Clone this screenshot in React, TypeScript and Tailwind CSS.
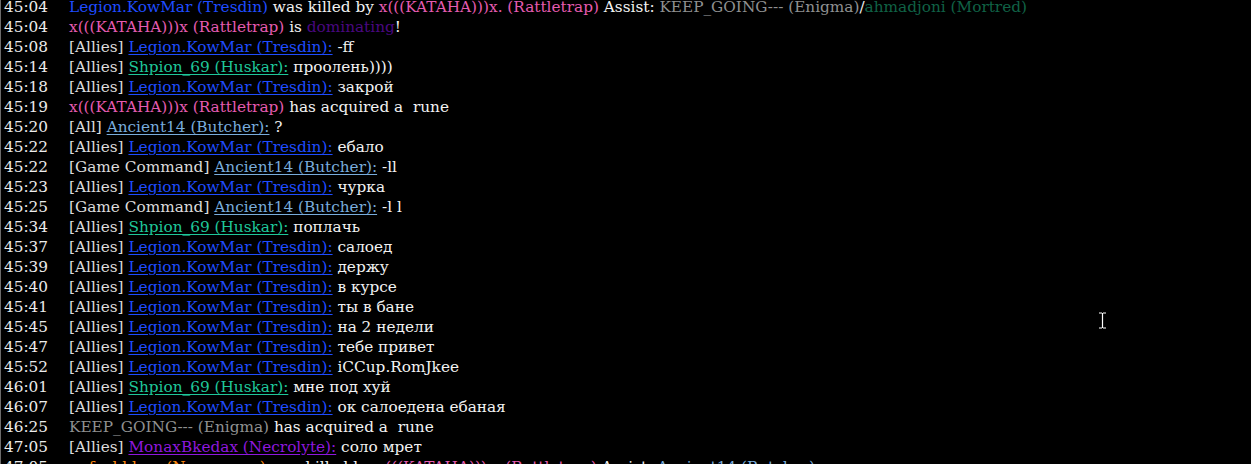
import type { JSX } from "react";

type Seg = { t: string; c?: string; u?: boolean };

const BLUE = "text-[#1f4cff]";
const PINK = "text-[#e55bb0]";
const TEAL = "text-[#1fc79a]";
const LBLUE = "text-[#78acdc]";
const GRAY = "text-[#8f9091]";
const DGREEN = "text-[#106246]";
const PURPLE = "text-[#8e18de]";
const DPURPLE = "text-[#4a0880]";
const ORANGE = "text-[#fe8a0e]";
const TAG = "text-[#dcdcdc]";

const kow = (msg: string): Seg[] => [
  { t: "[Allies] ", c: TAG },
  { t: "Legion.KowMar (Tresdin):", c: BLUE, u: true },
  { t: " " + msg },
];

const shpion = (msg: string): Seg[] => [
  { t: "[Allies] ", c: TAG },
  { t: "Shpion_69 (Huskar):", c: TEAL, u: true },
  { t: " " + msg },
];

const lines: { time: string; segs: Seg[] }[] = [
  {
    time: "45:04",
    segs: [
      { t: "Legion.KowMar (Tresdin)", c: BLUE },
      { t: " was killed by " },
      { t: "x(((KATAHA)))x. (Rattletrap)", c: PINK },
      { t: " Assist: " },
      { t: "KEEP_GOING--- (Enigma)", c: GRAY },
      { t: "/" },
      { t: "ahmadjoni (Mortred)", c: DGREEN },
    ],
  },
  {
    time: "45:04",
    segs: [
      { t: "x(((KATAHA)))x (Rattletrap)", c: PINK },
      { t: " is " },
      { t: "dominating", c: DPURPLE },
      { t: "!" },
    ],
  },
  { time: "45:08", segs: kow("-ff") },
  { time: "45:14", segs: shpion("проолень))))") },
  { time: "45:18", segs: kow("закрой") },
  {
    time: "45:19",
    segs: [
      { t: "x(((KATAHA)))x (Rattletrap)", c: PINK },
      { t: " has acquired a\u00a0 rune" },
    ],
  },
  {
    time: "45:20",
    segs: [
      { t: "[All] ", c: TAG },
      { t: "Ancient14 (Butcher):", c: LBLUE, u: true },
      { t: " ?" },
    ],
  },
  { time: "45:22", segs: kow("ебало") },
  {
    time: "45:22",
    segs: [
      { t: "[Game Command] ", c: TAG },
      { t: "Ancient14 (Butcher):", c: LBLUE, u: true },
      { t: " -ll" },
    ],
  },
  { time: "45:23", segs: kow("чурка") },
  {
    time: "45:25",
    segs: [
      { t: "[Game Command] ", c: TAG },
      { t: "Ancient14 (Butcher):", c: LBLUE, u: true },
      { t: " -l l" },
    ],
  },
  { time: "45:34", segs: shpion("поплачь") },
  { time: "45:37", segs: kow("салоед") },
  { time: "45:39", segs: kow("держу") },
  { time: "45:40", segs: kow("в курсе") },
  { time: "45:41", segs: kow("ты в бане") },
  { time: "45:45", segs: kow("на 2 недели") },
  { time: "45:47", segs: kow("тебе привет") },
  { time: "45:52", segs: kow("iCCup.RomJkee") },
  { time: "46:01", segs: shpion("мне под хуй") },
  { time: "46:07", segs: kow("ок салоедена ебаная") },
  {
    time: "46:25",
    segs: [
      { t: "KEEP_GOING--- (Enigma)", c: GRAY },
      { t: " has acquired a\u00a0 rune" },
    ],
  },
  {
    time: "47:05",
    segs: [
      { t: "[Allies] ", c: TAG },
      { t: "MonaxBkedax (Necrolyte):", c: PURPLE, u: true },
      { t: " соло мрет" },
    ],
  },
  {
    time: "47:05",
    segs: [
      { t: "unfeebble--- (Nevermore)", c: ORANGE },
      { t: " was killed by " },
      { t: "x(((KATAHA)))x. (Rattletrap)", c: PINK },
      { t: " Assist: " },
      { t: "Ancient14 (Butcher)", c: LBLUE },
    ],
  },
];

function Line({ time, segs }: { time: string; segs: Seg[] }): JSX.Element {
  return (
    <div className="flex h-5 items-center whitespace-nowrap">
      <span className="w-[65px] shrink-0 text-[#ececec]">{time}</span>
      <span>
        {segs.map((s, i) => (
          <span
            key={i}
            className={`${s.c ?? "text-[#f2f2f2]"} ${s.u ? "underline underline-offset-[2px]" : ""}`}
          >
            {s.t}
          </span>
        ))}
      </span>
    </div>
  );
}

export default function App() {
  return (
    <div className="relative h-[464px] w-[1251px] overflow-hidden bg-black">
      <div
        className="-mt-[3px] border-l border-[#6b6b6b] pl-[3px] text-[15.3px] leading-5"
        style={{ fontFamily: '"DejaVu Serif", "Liberation Serif", serif' }}
      >
        {lines.map((l, i) => (
          <Line key={i} time={l.time} segs={l.segs} />
        ))}
      </div>

      {/* text cursor */}
      <svg
        className="absolute left-[1097px] top-[312px]"
        width="11"
        height="17"
        viewBox="0 0 11 17"
      >
        <path d="M2 1h3M6 1h3M5.5 1v15M2 16h3M6 16h3" stroke="#fff" strokeWidth="1.2" fill="none" />
      </svg>
    </div>
  );
}
